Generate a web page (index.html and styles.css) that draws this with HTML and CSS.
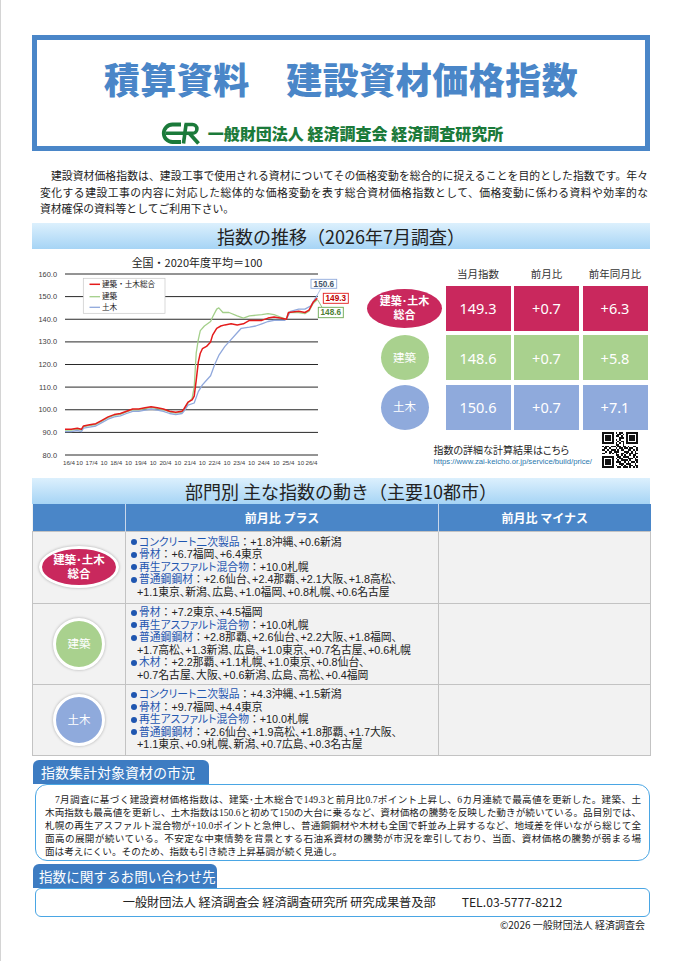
FILE: index.html
```html
<!DOCTYPE html>
<html lang="ja">
<head>
<meta charset="utf-8">
<title>積算資料 建設資材価格指数</title>
<link rel="stylesheet" href="styles.css">
</head>
<body>
<div class="page">
  <header class="hero">
    <h1 class="title">積算資料　建設資材価格指数</h1>
    <div class="org">
      <svg class="logo" width="42" height="25" viewBox="0 0 42 25">
        <path d="M20 3.5 H11.5 A8.5 8.5 0 0 0 11.5 21 H20" fill="none" stroke="#1b7a3a" stroke-width="3.8"/>
        <path d="M4.5 12.3 H31.5 A4.4 4.4 0 0 0 31.5 3.5 H23.5" fill="none" stroke="#1b7a3a" stroke-width="3.6"/>
        <path d="M25 3.5 L22.5 22.5" stroke="#1b7a3a" stroke-width="3.6"/>
        <path d="M28.5 12.5 L37.5 22.5" stroke="#1b7a3a" stroke-width="3.8"/>
      </svg>
      <span>一般財団法人 経済調査会 経済調査研究所</span>
    </div>
  </header>

  <p class="intro">
    <span class="jl">　建設資材価格指数は、建設工事で使用される資材についてその価格変動を総合的に捉えることを目的とした指数です。年々</span>
    <span class="jl">変化する建設工事の内容に対応した総体的な価格変動を表す総合資材価格指数として、価格変動に係わる資料や効率的な</span>
    <span>資材確保の資料等としてご利用下さい。</span>
  </p>

  <h2 class="band">指数の推移（2026年7月調査）</h2>

  <section class="trend">
    <svg class="chart" width="320" height="212" viewBox="0 0 320 212">
      <text class="ctitle" x="167" y="12" text-anchor="middle">全国・2020年度平均＝100</text>
      <g class="grid">
        <line x1="35" x2="288" y1="19" y2="19"/>
        <line x1="35" x2="288" y1="41.6" y2="41.6"/>
        <line x1="35" x2="288" y1="64.25" y2="64.25"/>
        <line x1="35" x2="288" y1="86.9" y2="86.9"/>
        <line x1="35" x2="288" y1="109.5" y2="109.5"/>
        <line x1="35" x2="288" y1="132.1" y2="132.1"/>
        <line x1="35" x2="288" y1="154.75" y2="154.75"/>
        <line x1="35" x2="288" y1="177.4" y2="177.4"/>
        <line x1="35" x2="288" y1="200" y2="200"/>
      </g>
      <g class="ylab" text-anchor="end">
        <text x="27" y="21.5">160.0</text>
        <text x="27" y="44.1">150.0</text>
        <text x="27" y="66.8">140.0</text>
        <text x="27" y="89.4">130.0</text>
        <text x="27" y="112">120.0</text>
        <text x="27" y="134.6">110.0</text>
        <text x="27" y="157.3">100.0</text>
        <text x="27" y="179.9">90.0</text>
        <text x="27" y="202.5">80.0</text>
      </g>
      <g class="xlab" text-anchor="middle">
        <text x="39" y="210">16/4</text>
        <text x="49.5" y="210">10</text>
        <text x="61.6" y="210">17/4</text>
        <text x="73.9" y="210">10</text>
        <text x="86.2" y="210">18/4</text>
        <text x="98.5" y="210">10</text>
        <text x="110.8" y="210">19/4</text>
        <text x="123.1" y="210">10</text>
        <text x="135.4" y="210">20/4</text>
        <text x="147.7" y="210">10</text>
        <text x="160" y="210">21/4</text>
        <text x="172.3" y="210">10</text>
        <text x="184.6" y="210">22/4</text>
        <text x="196.9" y="210">10</text>
        <text x="209.2" y="210">23/4</text>
        <text x="221.5" y="210">10</text>
        <text x="233.8" y="210">24/4</text>
        <text x="246.1" y="210">10</text>
        <text x="258.4" y="210">25/4</text>
        <text x="270.7" y="210">10</text>
        <text x="281.5" y="210">26/4</text>
      </g>
      <polyline class="ln green" points="35,175.1 41.2,175.1 47.3,174.0 51.4,175.1 53.5,171.7 59.6,170.6 65.8,169.5 71.9,166.1 78.1,162.7 84.2,160.4 90.4,159.3 96.5,157.0 102.7,154.75 108.8,154.75 115,153.6 121.1,152.5 127.3,153.6 133.4,154.75 139.6,157.0 145.7,158.1 151.9,157.0 153.9,154.75 158,148.0 162.1,143.4 164.2,132.1 166.2,98.2 168.3,84.6 170.3,75.6 174.4,71.0 180.6,66.5 182.6,62.0 186.7,54.1 188.8,52.9 192.9,57.5 199,57.5 207.2,60.85 213.4,63.1 219.5,60.85 231.8,59.7 238,58.6 244.1,59.7 250.3,62.0 256.4,64.25 258.5,57.5 268.7,57.5 274.9,58.6 279,56.3 283.1,48.4 287.2,44.8"/>
      <polyline class="ln blue" points="35,176.6 41.2,176.6 47.3,175.5 51.4,176.6 53.5,173.2 59.6,172.1 65.8,171 71.9,167.6 78.1,164.2 84.2,161.9 90.4,160.8 96.5,158.5 102.7,156.3 108.8,156.3 115,155.1 121.1,154 127.3,155.1 133.4,156.3 139.6,158.5 145.7,159.6 151.9,158.5 153.9,156.3 158,150.2 164.2,148.0 168.3,136.65 172.4,129.9 176.5,125.3 180.6,120.8 184.7,109.5 188.8,100.45 194.9,91.4 199,86.9 207.2,77.8 211.3,73.3 219.5,72.2 225.7,71.0 231.8,68.8 238,66.5 244.1,65.4 254.4,65.4 256.4,64.25 260.5,56.3 268.7,54.1 274.9,54.1 281,50.7 287.2,40.3"/>
      <polyline class="ln red" points="35,174.3 41.2,174.3 47.3,173.2 51.4,174.3 53.5,170.9 59.6,169.8 65.8,168.7 71.9,165.3 78.1,161.9 84.2,159.6 90.4,158.5 96.5,156.2 102.7,154 108.8,154 115,152.8 121.1,151.7 127.3,152.8 133.4,154 139.6,156.2 145.7,157.3 151.9,156.2 153.9,154 158,147.2 162.1,144.9 164.2,141.2 166.2,125.3 168.3,107.2 170.3,98.2 172.4,93.7 176.5,91.4 180.6,86.9 182.6,80.1 186.7,73.3 190.8,71.0 194.9,69.9 201.1,68.8 207.2,69.9 213.4,68.8 219.5,65.4 231.8,65.4 238,63.1 244.1,62.0 250.3,63.1 256.4,64.25 258.5,57.5 268.7,56.3 274.9,57.5 279,55.2 283.1,47.3 287.2,43.2"/>
      <rect class="legend" x="53.3" y="23.3" width="81.7" height="35"/>
      <line x1="59.5" x2="70" y1="29.3" y2="29.3" class="ln red"/>
      <line x1="59.5" x2="70" y1="41.7" y2="41.7" class="ln green"/>
      <line x1="59.5" x2="70" y1="52.3" y2="52.3" class="ln blue"/>
      <g class="leg">
        <text x="72" y="32">建築・土木総合</text>
        <text x="72" y="44.4">建築</text>
        <text x="72" y="55">土木</text>
      </g>
      <line x1="287" y1="40.5" x2="291" y2="33.3" class="lead-b"/>
      <line x1="287.5" y1="44.5" x2="292" y2="52.3" class="lead-g"/>
      <rect x="281" y="24.3" width="25.7" height="9" class="tag tb"/>
      <text x="293.85" y="31.6" class="tagt tbt" text-anchor="middle">150.6</text>
      <rect x="293.3" y="38.3" width="25" height="10" class="tag tr"/>
      <text x="305.8" y="46.1" class="tagt trt" text-anchor="middle">149.3</text>
      <rect x="288.3" y="52.3" width="25" height="10.4" class="tag tg"/>
      <text x="300.8" y="60.3" class="tagt tgt" text-anchor="middle">148.6</text>
    </svg>

    <div class="summary">
      <div class="sgrid">
        <div class="sh"></div>
        <div class="sh">当月指数</div>
        <div class="sh">前月比</div>
        <div class="sh">前年同月比</div>

        <div class="sl"><div class="oval ov-all"><span>建築･土木</span><span>総合</span></div></div>
        <div class="cell c-all">149.3</div>
        <div class="cell c-all">+0.7</div>
        <div class="cell c-all">+6.3</div>

        <div class="sl"><div class="oval ov-arch">建築</div></div>
        <div class="cell c-arch">148.6</div>
        <div class="cell c-arch">+0.7</div>
        <div class="cell c-arch">+5.8</div>

        <div class="sl"><div class="oval ov-civil">土木</div></div>
        <div class="cell c-civil">150.6</div>
        <div class="cell c-civil">+0.7</div>
        <div class="cell c-civil">+7.1</div>
      </div>
      <div class="detail">
        <div class="dtext">
          <div class="dlabel">指数の詳細な計算結果はこちら</div>
          <div class="durl">https://www.zai-keicho.or.jp/service/build/price/</div>
        </div>
        <svg class="qr" width="36" height="36" viewBox="0 0 21 21" shape-rendering="crispEdges">
          <path stroke="#111" stroke-width="1" fill="none" d="M0 0.5h7M8 0.5h1M10 0.5h2M14 0.5h7M0 1.5h1M6 1.5h1M9 1.5h2M12 1.5h1M14 1.5h1M20 1.5h1M0 2.5h1M2 2.5h3M6 2.5h1M8 2.5h2M11 2.5h1M14 2.5h1M16 2.5h3M20 2.5h1M0 3.5h1M2 3.5h3M6 3.5h1M10 3.5h3M14 3.5h1M16 3.5h3M20 3.5h1M0 4.5h1M2 4.5h3M6 4.5h1M8 4.5h1M10 4.5h1M14 4.5h1M16 4.5h3M20 4.5h1M0 5.5h1M6 5.5h1M9 5.5h1M11 5.5h2M14 5.5h1M20 5.5h1M0 6.5h7M8 6.5h1M10 6.5h1M12 6.5h1M14 6.5h7M8 7.5h2M12 7.5h1M0 8.5h1M2 8.5h2M5 8.5h3M9 8.5h2M12 8.5h2M15 8.5h1M18 8.5h2M1 9.5h2M4 9.5h1M8 9.5h1M10 9.5h2M13 9.5h2M16 9.5h2M20 9.5h1M0 10.5h2M3 10.5h1M5 10.5h3M9 10.5h1M11 10.5h2M15 10.5h2M18 10.5h1M20 10.5h1M2 11.5h1M4 11.5h2M7 11.5h3M13 11.5h3M17 11.5h1M19 11.5h1M0 12.5h2M4 12.5h1M6 12.5h1M8 12.5h1M11 12.5h2M14 12.5h1M16 12.5h2M19 12.5h2M8 13.5h2M11 13.5h1M13 13.5h1M16 13.5h1M18 13.5h2M0 14.5h7M9 14.5h2M12 14.5h4M18 14.5h1M20 14.5h1M0 15.5h1M6 15.5h1M8 15.5h1M10 15.5h2M15 15.5h3M19 15.5h1M0 16.5h1M2 16.5h3M6 16.5h1M9 16.5h1M11 16.5h4M16 16.5h1M19 16.5h2M0 17.5h1M2 17.5h3M6 17.5h1M8 17.5h3M13 17.5h1M15 17.5h1M17 17.5h2M20 17.5h1M0 18.5h1M2 18.5h3M6 18.5h1M10 18.5h3M14 18.5h3M19 18.5h1M0 19.5h1M6 19.5h1M8 19.5h1M11 19.5h1M13 19.5h1M16 19.5h2M19 19.5h2M0 20.5h7M9 20.5h2M12 20.5h3M16 20.5h1M18 20.5h1M20 20.5h1"/>
        </svg>
      </div>
    </div>
  </section>

  <h2 class="band">部門別 主な指数の動き（主要10都市）</h2>

  <table class="moves">
    <colgroup><col class="col-a"><col class="col-b"><col class="col-c"></colgroup>
    <thead>
      <tr><th></th><th>前月比 プラス</th><th>前月比 マイナス</th></tr>
    </thead>
    <tbody>
      <tr class="r1">
        <td class="cat"><div class="toval t-all"><span>建築･土木</span><span>総合</span></div></td>
        <td>
          <ul class="items">
            <li><span class="k"><span class="dot"></span>コンクリート二次製品</span><span class="c">：</span>+1.8沖縄、+0.6新潟</li>
            <li><span class="k"><span class="dot"></span>骨材</span><span class="c">：</span>+6.7福岡、+6.4東京</li>
            <li><span class="k"><span class="dot"></span>再生アスファルト混合物</span><span class="c">：</span>+10.0札幌</li>
            <li><span class="k"><span class="dot"></span>普通鋼鋼材</span><span class="c">：</span>+2.6仙台、+2.4那覇、+2.1大阪、+1.8高松、</li>
            <li class="cont">+1.1東京、新潟、広島、+1.0福岡、+0.8札幌、+0.6名古屋</li>
          </ul>
        </td>
        <td></td>
      </tr>
      <tr class="r2">
        <td class="cat"><div class="toval t-arch">建築</div></td>
        <td>
          <ul class="items">
            <li><span class="k"><span class="dot"></span>骨材</span><span class="c">：</span>+7.2東京、+4.5福岡</li>
            <li><span class="k"><span class="dot"></span>再生アスファルト混合物</span><span class="c">：</span>+10.0札幌</li>
            <li><span class="k"><span class="dot"></span>普通鋼鋼材</span><span class="c">：</span>+2.8那覇、+2.6仙台、+2.2大阪、+1.8福岡、</li>
            <li class="cont">+1.7高松、+1.3新潟、広島、+1.0東京、+0.7名古屋、+0.6札幌</li>
            <li><span class="k"><span class="dot"></span>木材</span><span class="c">：</span>+2.2那覇、+1.1札幌、+1.0東京、+0.8仙台、</li>
            <li class="cont">+0.7名古屋、大阪、+0.6新潟、広島、高松、+0.4福岡</li>
          </ul>
        </td>
        <td></td>
      </tr>
      <tr class="r3">
        <td class="cat"><div class="toval t-civil">土木</div></td>
        <td>
          <ul class="items">
            <li><span class="k"><span class="dot"></span>コンクリート二次製品</span><span class="c">：</span>+4.3沖縄、+1.5新潟</li>
            <li><span class="k"><span class="dot"></span>骨材</span><span class="c">：</span>+9.7福岡、+4.4東京</li>
            <li><span class="k"><span class="dot"></span>再生アスファルト混合物</span><span class="c">：</span>+10.0札幌</li>
            <li><span class="k"><span class="dot"></span>普通鋼鋼材</span><span class="c">：</span>+2.6仙台、+1.9高松、+1.8那覇、+1.7大阪、</li>
            <li class="cont">+1.1東京、+0.9札幌、新潟、+0.7広島、+0.3名古屋</li>
          </ul>
        </td>
        <td></td>
      </tr>
    </tbody>
  </table>

  <div class="tab tab-market">指数集計対象資材の市況</div>
  <div class="box market">
    <span class="jl">　7月調査に基づく建設資材価格指数は、建築･土木総合で149.3と前月比0.7ポイント上昇し、6カ月連続で最高値を更新した。建築、土</span>
    <span class="jl">木両指数も最高値を更新し、土木指数は150.6と初めて150の大台に乗るなど、資材価格の騰勢を反映した動きが続いている。品目別では、</span>
    <span class="jl">札幌の再生アスファルト混合物が+10.0ポイントと急伸し、普通鋼鋼材や木材も全国で軒並み上昇するなど、地域差を伴いながら総じて全</span>
    <span class="jl">面高の展開が続いている。不安定な中東情勢を背景とする石油系資材の騰勢が市況を牽引しており、当面、資材価格の騰勢が弱まる場</span>
    <span>面は考えにくい。そのため、指数も引き続き上昇基調が続く見通し。</span>
  </div>

  <div class="tab tab-contact">指数に関するお問い合わせ先</div>
  <div class="box contact">一般財団法人 経済調査会 経済調査研究所 研究成果普及部<span class="gap"></span>TEL.03-5777-8212</div>

  <p class="copy">©2026 一般財団法人 経済調査会</p>
</div>
</body>
</html>
```

FILE: styles.css
```css
html, body {
  margin: 0;
  background: #fff;
}
body {
  font-family: "Noto Sans CJK JP", "Noto Sans", sans-serif;
  color: #222;
  border-left: 1px solid #d4d4d4;
  min-height: 961px;
  box-sizing: border-box;
}
.page {
  width: 618px;
  margin-left: 31px;
  padding-top: 35px;
}

/* header */
.hero {
  border: 5px solid #4a86c8;
  height: 116px;
  box-sizing: border-box;
  display: flex;
  flex-direction: column;
  align-items: center;
}
.title {
  margin: 20px 0 0;
  font-size: 36px;
  line-height: 36px;
  font-weight: 900;
  color: #4a86c8;
  letter-spacing: 0.5px;
}
.org {
  margin-top: 25px;
  display: flex;
  align-items: center;
  gap: 5px;
  height: 25px;
  color: #1b7a3a;
  font-weight: 900;
  font-size: 16px;
  line-height: 25px;
  padding-right: 18px;
}
.logo { display: block; }

/* intro */
.intro {
  margin: 16px 0 0 8px;
  width: 608px;
  font-size: 10.8px;
  line-height: 16.5px;
  color: #222;
}
.intro span, .market span { display: block; }
.jl {
  text-align: justify;
  text-align-last: justify;
}

/* bands */
.band {
  margin: 6px 0 0;
  height: 26px;
  line-height: 26px;
  background: linear-gradient(#dcf0fd, #a6d4f5);
  text-align: center;
  font-size: 18px;
  font-weight: 400;
  color: #222;
}
.trend + .band { margin-top: 0; }

/* trend section */
.trend {
  display: flex;
  height: 229px;
}
.chart {
  display: block;
  margin: 6.5px 0 0 -2px;
  flex: none;
}
.ctitle { font-size: 11px; fill: #222; }
.grid line { stroke: #111; stroke-width: 0.9; }
.ylab text { font-family: "Liberation Sans", sans-serif; font-size: 7.4px; fill: #404040; }
.xlab text { font-family: "Liberation Sans", sans-serif; font-size: 6.2px; fill: #404040; }
.ln { fill: none; stroke-width: 1.3; stroke-linejoin: round; }
.ln.red { stroke: #e41b1b; stroke-width: 1.5; }
.ln.green { stroke: #a3cf8a; }
.ln.blue { stroke: #90a8dc; }
.legend { fill: #fff; stroke: #c8c8c8; stroke-width: 0.7; }
.leg text { font-size: 7.6px; fill: #222; }
.tag { fill: #fff; stroke-width: 0.9; }
.tb { stroke: #8ea9db; }
.tr { stroke: #e41b1b; }
.tg { stroke: #6aa84f; }
.tagt { font-family: "Liberation Sans", sans-serif; font-weight: 700; font-size: 8.2px; }
.tbt { fill: #44546a; }
.trt { fill: #c00000; }
.tgt { fill: #4f7f34; }
.lead-b { stroke: #8ea9db; stroke-width: 0.7; }
.lead-g { stroke: #6aa84f; stroke-width: 0.7; }

.summary {
  margin-left: 11px;
  width: 289px;
}
.sgrid {
  display: grid;
  grid-template-columns: 81px 65px 65px 65px;
  grid-template-rows: 14px 45px 45px 45px;
  column-gap: 3.5px;
  row-gap: 4.5px;
  margin-top: 18.5px;
}
.sh {
  font-size: 10.5px;
  line-height: 14px;
  text-align: center;
  color: #333;
}
.sl {
  display: flex;
  align-items: center;
  justify-content: center;
}
.oval {
  display: flex;
  flex-direction: column;
  align-items: center;
  justify-content: center;
  text-align: center;
  color: #fff;
  font-family: "Liberation Sans", "Noto Sans CJK JP", sans-serif;
  font-weight: 700;
  font-size: 11px;
  line-height: 16px;
  border-radius: 50%;
}
.ov-all { width: 76px; height: 39px; background: #c9285d; margin-left: 6px; }
.ov-all span { display: block; height: 14px; line-height: 14px; }
.ov-arch { width: 48px; height: 45px; background: #a9d18e; font-weight: 400; font-size: 11.5px; margin-left: 6px; }
.ov-civil { width: 48px; height: 45px; background: #8faadc; font-weight: 400; font-size: 11.5px; margin-left: 6px; }
.cell {
  display: flex;
  align-items: center;
  justify-content: center;
  color: #fff;
  font-family: "Noto Sans", sans-serif;
  font-size: 14.5px;
}
.c-all { background: #c9285d; }
.c-arch { background: #a9d18e; }
.c-civil { background: #8faadc; }

.detail {
  display: flex;
  justify-content: flex-end;
  align-items: flex-end;
  margin-top: 2.5px;
  padding-right: 12px;
}
.dtext {
  margin-right: 10px;
  padding-bottom: 1px;
}
.dlabel {
  font-size: 10px;
  line-height: 14px;
  font-feature-settings: "palt";
  color: #222;
}
.durl {
  font-family: "Liberation Sans", sans-serif;
  font-size: 7.7px;
  line-height: 10px;
  color: #2a78ad;
}
.qr { display: block; }

/* moves table */
.moves {
  width: 618px;
  border-collapse: collapse;
  table-layout: fixed;
  background: #f2f2f2;
}
.col-a { width: 93px; }
.col-b { width: 313px; }
.col-c { width: 212px; }
.moves th {
  height: 27px;
  padding: 0;
  background: #4a86c8;
  color: #fff;
  font-size: 12px;
  font-weight: 700;
  border-left: 1px solid #c9d7ea;
}
.moves th:first-child { border-left: none; }
.moves td {
  padding: 0;
  border: 1px solid #c3c3c3;
  vertical-align: middle;
}
.moves tr.r1 td { height: 71px; }
.moves tr.r2 td { height: 80px; }
.moves tr.r3 td { height: 70px; }
.cat { text-align: center; }
.toval {
  display: inline-flex;
  flex-direction: column;
  align-items: center;
  justify-content: center;
  color: #fff;
  font-family: "Liberation Sans", "Noto Sans CJK JP", sans-serif;
  font-size: 11.5px;
  line-height: 16px;
  border: 3px solid #fff;
  border-radius: 50%;
  box-shadow: 0 0 3px rgba(0, 0, 0, 0.3);
  vertical-align: middle;
}
.toval span { display: block; height: 14px; line-height: 14px; }
.t-all { width: 74px; height: 36px; background: #c9285d; font-weight: 700; }
.t-arch { width: 46px; height: 46px; background: #a9d18e; }
.t-civil { width: 46px; height: 46px; background: #8faadc; }
.items {
  list-style: none;
  margin: 0;
  padding: 0 0 0 4px;
  font-family: "Liberation Sans", "Noto Sans CJK JP", sans-serif;
  font-size: 10.8px;
  line-height: 12.5px;
  font-feature-settings: "palt";
  color: #222;
}
.items li { height: 12.5px; white-space: nowrap; }
.items .k { color: #1f56b0; }
.items .dot {
  display: inline-block;
  width: 6px;
  height: 6px;
  border-radius: 50%;
  background: #1f56b0;
  margin: 0 2px 1px 1px;
  vertical-align: middle;
}
.items .c { font-feature-settings: normal; }
.items .cont { padding-left: 7px; }

/* tabs and boxes */
.tab {
  margin-top: 4px;
  height: 24px;
  line-height: 24px;
  background: #3d7cc2;
  color: #fff;
  font-size: 14px;
  padding-left: 8px;
  border-radius: 6px 6px 0 0;
  box-sizing: border-box;
  white-space: nowrap;
}
.tab-market { width: 176px; margin-left: 1px; }
.tab-contact { width: 184px; margin-left: 1px; margin-top: 3px; font-size: 13.6px; padding-left: 6px; }
.box {
  margin-left: 3px;
  border: 1.5px solid #4aa6e4;
  box-sizing: border-box;
}
.market {
  height: 77px;
  border-radius: 12px;
  padding: 8px 8px 0 9px;
  font-family: "Liberation Serif", "Noto Sans CJK JP", serif;
  font-size: 9.6px;
  line-height: 13px;
  color: #222;
}
.contact {
  height: 29px;
  border-radius: 6px;
  text-align: center;
  font-size: 12.2px;
  line-height: 26px;
  color: #222;
}
.gap { display: inline-block; width: 26px; }
.copy {
  margin: 1px 0 0;
  text-align: right;
  padding-right: 5px;
  font-size: 10px;
  line-height: 14px;
  color: #222;
}
```
